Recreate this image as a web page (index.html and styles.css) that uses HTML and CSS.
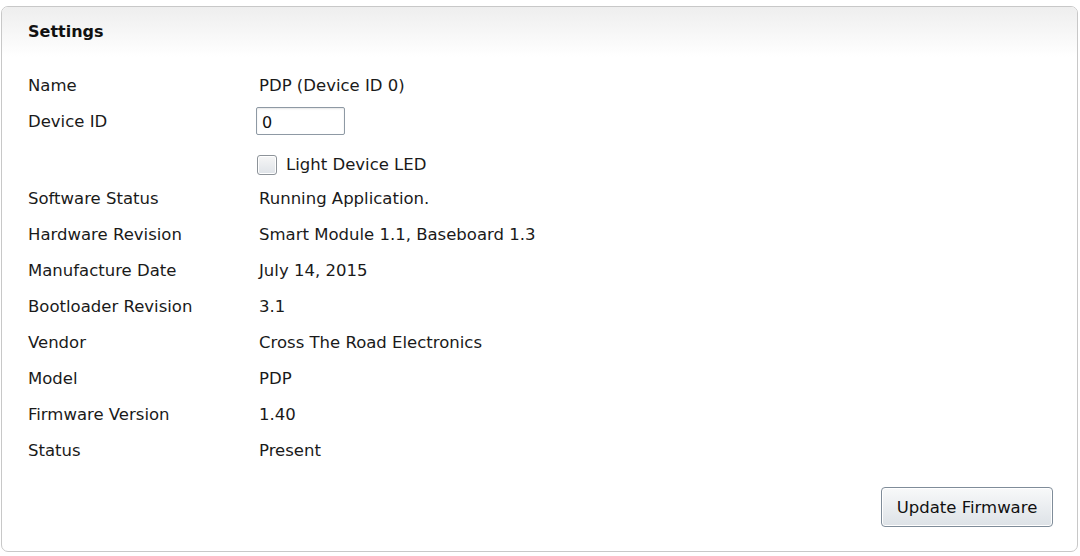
FILE: index.html
```html
<!DOCTYPE html>
<html>
<head>
<meta charset="utf-8">
<link rel="stylesheet" href="styles.css">
</head>
<body>
<div class="card">
  <div class="card-header">Settings</div>
  <div class="card-body">
    <div class="grid">
      <div class="label">Name</div><div class="value">PDP (Device ID 0)</div>
      <div class="label">Device ID</div><div class="value"><input class="text-input" type="text" value="0"></div>
      <div class="label"></div><div class="value check-row"><span class="checkbox"></span><span>Light Device LED</span></div>
      <div class="label">Software Status</div><div class="value">Running Application.</div>
      <div class="label">Hardware Revision</div><div class="value">Smart Module 1.1, Baseboard 1.3</div>
      <div class="label">Manufacture Date</div><div class="value">July 14, 2015</div>
      <div class="label">Bootloader Revision</div><div class="value">3.1</div>
      <div class="label">Vendor</div><div class="value">Cross The Road Electronics</div>
      <div class="label">Model</div><div class="value">PDP</div>
      <div class="label">Firmware Version</div><div class="value">1.40</div>
      <div class="label">Status</div><div class="value">Present</div>
    </div>
    <div class="actions"><button class="btn">Update Firmware</button></div>
  </div>
</div>
</body>
</html>
```

FILE: styles.css
```css
html, body { margin: 0; padding: 0; background: #fff; }
body {
  font-family: "DejaVu Sans", Verdana, sans-serif;
  font-size: 16.5px;
  color: #1a1a1a;
  padding: 6px 2px 0 1px;
}
.card {
  width: 1077px;
  height: 546px;
  border: 1px solid #c8c8c8;
  border-radius: 7px;
  box-sizing: border-box;
  display: flex;
  flex-direction: column;
  overflow: hidden;
}
.card-header {
  height: 50px;
  padding: 15px 0 0 26px;
  box-sizing: border-box;
  font-weight: bold;
  font-size: 16px;
  color: #111;
  background: linear-gradient(#eeeeee, #ffffff);
}
.card-body {
  flex: 1;
  padding: 10px 24px 0 26px;
  display: flex;
  flex-direction: column;
}
.grid {
  display: grid;
  grid-template-columns: 231px 1fr;
  grid-template-rows: 36px 36px 41px;
  grid-auto-rows: 36px;
}
.label, .value {
  display: flex;
  align-items: center;
}
.check-row { gap: 9px; padding-top: 10px; box-sizing: border-box; }
.text-input {
  width: 89px;
  height: 28px;
  box-sizing: border-box;
  margin-left: -3px;
  border: 1px solid #8e99a4;
  border-radius: 2px;
  font-family: inherit;
  font-size: 16px;
  padding: 2px 5px 0;
  color: #111;
  box-shadow: inset 0 1px 2px rgba(0,0,0,0.1);
}
.checkbox {
  width: 20px;
  height: 20px;
  box-sizing: border-box;
  margin-left: -2px;
  border: 1px solid #8d9399;
  border-radius: 3px;
  background: linear-gradient(#f6f6f6, #dfe3e8);
  box-shadow: inset 0 0 0 1px #fff;
}
.actions {
  margin-top: 19px;
  display: flex;
  justify-content: flex-end;
}
.btn {
  width: 172px;
  height: 40px;
  border: 1px solid #7f8c99;
  border-radius: 4px;
  background: linear-gradient(#f8f9fa, #dde2e7);
  font-family: inherit;
  font-size: 16.5px;
  color: #111;
  box-shadow: inset 0 0 0 1px #fff;
}
```
